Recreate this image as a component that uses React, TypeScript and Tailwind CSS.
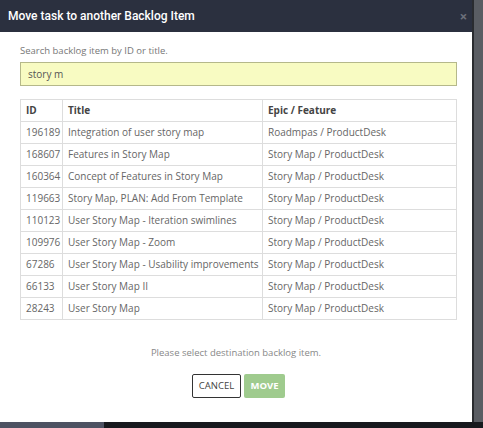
import React from "react";

const rows = [
  { id: "196189", title: "Integration of user story map", epic: "Roadmpas / ProductDesk" },
  { id: "168607", title: "Features in Story Map", epic: "Story Map / ProductDesk" },
  { id: "160364", title: "Concept of Features in Story Map", epic: "Story Map / ProductDesk" },
  { id: "119663", title: "Story Map, PLAN: Add From Template", epic: "Story Map / ProductDesk" },
  { id: "110123", title: "User Story Map - Iteration swimlines", epic: "Story Map / ProductDesk" },
  { id: "109976", title: "User Story Map - Zoom", epic: "Story Map / ProductDesk" },
  { id: "67286", title: "User Story Map - Usability improvements", epic: "Story Map / ProductDesk" },
  { id: "66133", title: "User Story Map II", epic: "Story Map / ProductDesk" },
  { id: "28243", title: "User Story Map", epic: "Story Map / ProductDesk" },
];

export default function App() {
  return (
    <div className="w-[483px] h-[428px] overflow-hidden bg-[#1c1f26] flex flex-col">
      <div className="flex flex-1 min-h-0">
        {/* Dialog */}
        <div className="w-[472px] flex flex-col bg-white">
          <div
            className="h-[32px] bg-[#2b303f] flex items-center justify-between pl-[8px] pr-[5px] text-white text-[12px] font-medium"
            style={{ fontFamily: "Roboto, 'Liberation Sans', sans-serif" }}
          >
            <span>Move task to another Backlog Item</span>
            <span className="text-[#6b6f7a] text-[13px] font-bold leading-none">×</span>
          </div>

          <div
            className="flex-1 px-[20px] pt-[12px] text-[#666] text-[10px]"
            style={{ fontFamily: "'Open Sans', 'Liberation Sans', sans-serif" }}
          >
            <div className="text-[#777] h-[14px] leading-[14px] text-[9.5px]">Search backlog item by ID or title.</div>
            <div className="mt-[4px] h-[24px] w-[437px] bg-[#f8fbc2] border border-[#b5b88a] flex items-center px-[7px] text-[#555]">
              story m
            </div>

            <table className="mt-[13px] w-[437px] table-fixed border-collapse border border-[#ddd]">
              <colgroup>
                <col className="w-[42px]" />
                <col className="w-[200px]" />
                <col />
              </colgroup>
              <thead>
                <tr className="h-[22px]">
                  <th className="border border-[#ddd] text-left font-bold text-[#444] px-[5px]">ID</th>
                  <th className="border border-[#ddd] text-left font-bold text-[#444] px-[5px]">Title</th>
                  <th className="border border-[#ddd] text-left font-bold text-[#444] px-[5px]">Epic / Feature</th>
                </tr>
              </thead>
              <tbody>
                {rows.map((r) => (
                  <tr key={r.id} className="h-[22px]">
                    <td className="border border-[#ddd] px-[5px] whitespace-nowrap">{r.id}</td>
                    <td className="border border-[#ddd] px-[5px] whitespace-nowrap">{r.title}</td>
                    <td className="border border-[#ddd] px-[5px] whitespace-nowrap">{r.epic}</td>
                  </tr>
                ))}
              </tbody>
            </table>

            <div className="mt-[26px] text-center text-[#888] text-[9.5px]">Please select destination backlog item.</div>

            <div className="mt-[14px] flex justify-center gap-[3px] pl-[5px]">
              <button className="h-[24px] w-[49px] border border-[#333] rounded-[2px] bg-white text-[#444] text-[9.5px]">
                CANCEL
              </button>
              <button className="h-[24px] w-[41px] rounded-[2px] bg-[#9fcb8e] text-white text-[9.5px] font-bold">
                MOVE
              </button>
            </div>
          </div>
        </div>
        {/* right strip */}
        <div className="flex-1 bg-[#5a5d63] border-l-[2px] border-[#2a2c30]" />
      </div>
      <div className="h-[6px] flex">
        <div className="w-[104px] bg-[#4d5262]" />
        <div className="flex-1 bg-[#17191d]" />
      </div>
    </div>
  );
}
